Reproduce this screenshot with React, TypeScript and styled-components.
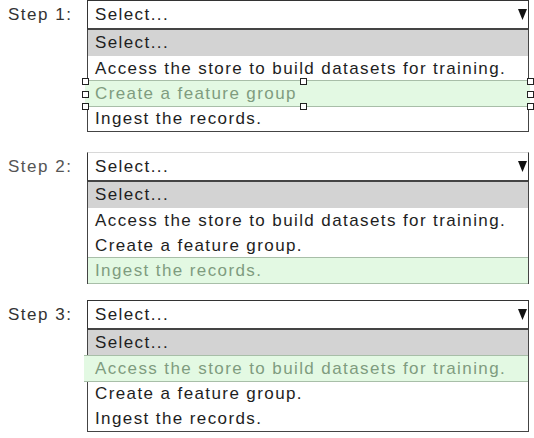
import React from 'react'
import styled, { createGlobalStyle } from 'styled-components'

const GlobalStyle = createGlobalStyle`
  body {
    margin: 0;
    background: #ffffff;
    font-family: "Liberation Sans", Arial, sans-serif;
  }
`

const options = [
  'Access the store to build datasets for training.',
  'Create a feature group.',
  'Ingest the records.',
]

const Page = styled.div`
  display: flex;
  flex-direction: column;
  padding: 0 5px 0 8px;
  width: 534px;
  box-sizing: border-box;
`

const StepRow = styled.div<{ $gap: number }>`
  display: flex;
  align-items: flex-start;
  margin-top: ${(p) => p.$gap}px;
`

const StepLabel = styled.div<{ $faded?: boolean }>`
  width: 79px;
  flex: none;
  font-size: 17px;
  line-height: 30px;
  letter-spacing: 1.5px;
  color: ${(p) => (p.$faded ? '#555' : '#333')};
`

const Dropdown = styled.div`
  width: 442px;
  display: flex;
  flex-direction: column;
`

const SelectBox = styled.div<{ $noTop?: boolean }>`
  height: 30px;
  box-sizing: border-box;
  border: 1px solid #333;
  border-top-color: ${(p) => (p.$noTop ? '#d8d8d8' : '#333')};
  border-bottom: 2px solid #444;
  display: flex;
  align-items: center;
  justify-content: space-between;
  padding: 0 1px 0 7px;
  font-size: 17px;
  letter-spacing: 1.4px;
  color: #222;
`

const Arrow = styled.svg`
  width: 9px;
  height: 11px;
  flex: none;
`

const List = styled.div`
  border: 1px solid #444;
  border-top: none;
  display: flex;
  flex-direction: column;
`

const Option = styled.div<{ $variant?: 'gray' | 'green' | 'plain' }>`
  position: relative;
  height: ${(p) => (p.$variant === 'gray' ? 26 : 25)}px;
  box-sizing: border-box;
  padding-left: 7px;
  display: flex;
  align-items: center;
  font-size: 17px;
  letter-spacing: 1.4px;
  white-space: nowrap;
  color: ${(p) => (p.$variant === 'green' ? '#7f9c7f' : '#1e1e1e')};
  background: ${(p) =>
    p.$variant === 'gray' ? '#d3d3d3' : p.$variant === 'green' ? '#e3f9e3' : 'transparent'};
  border-top: ${(p) => (p.$variant === 'green' ? '1px solid #a8bea8' : 'none')};
  border-bottom: ${(p) => (p.$variant === 'green' ? '1px solid #a8bea8' : 'none')};
`

const WideOption = styled(Option)<{ $left: number; $right: number }>`
  margin: -1px ${(p) => -p.$right}px -1px ${(p) => -p.$left}px;
  padding-left: ${(p) => 7 + p.$left}px;
  height: 27px;
  z-index: 1;
`

const Handle = styled.span<{ $x: string; $y: string }>`
  position: absolute;
  left: ${(p) => p.$x};
  top: ${(p) => p.$y};
  width: 5px;
  height: 5px;
  margin: -3px 0 0 -3px;
  border: 1px solid #222;
  background: #ffffff;
`

const handlePoints: [string, string][] = [
  ['0%', '0%'],
  ['0%', '50%'],
  ['0%', '100%'],
  ['49%', '0%'],
  ['49%', '100%'],
  ['100%', '0%'],
  ['100%', '50%'],
  ['100%', '100%'],
]

interface StepProps {
  label: string
  picked: number
  gap: number
  handles?: boolean
  faded?: boolean
  left: number
  right: number
}

const Step: React.FC<StepProps> = ({ label, picked, gap, handles, faded, left, right }) => (
  <StepRow $gap={gap}>
    <StepLabel $faded={faded}>{label}</StepLabel>
    <Dropdown>
      <SelectBox $noTop={faded}>
        <span>Select...</span>
        <Arrow viewBox="0 0 9 11">
          <polygon points="0,0 9,0 4.5,11" fill="#111" />
        </Arrow>
      </SelectBox>
      <List>
        <Option $variant="gray">Select...</Option>
        {options.map((text, i) =>
          i === picked ? (
            <WideOption key={text} $variant="green" $left={left} $right={right}>
              {handles ? text.replace('.', '') : text}
              {handles &&
                handlePoints.map(([x, y]) => <Handle key={x + y} $x={x} $y={y} />)}
            </WideOption>
          ) : (
            <Option key={text}>{text}</Option>
          )
        )}
      </List>
    </Dropdown>
  </StepRow>
)

export default function App() {
  return (
    <>
      <GlobalStyle />
      <Page>
        <Step label="Step 1:" picked={1} gap={0} handles left={3} right={2} />
        <Step label="Step 2:" picked={2} gap={20} faded left={0} right={0} />
        <Step label="Step 3:" picked={0} gap={16} left={4} right={0} />
      </Page>
    </>
  )
}
